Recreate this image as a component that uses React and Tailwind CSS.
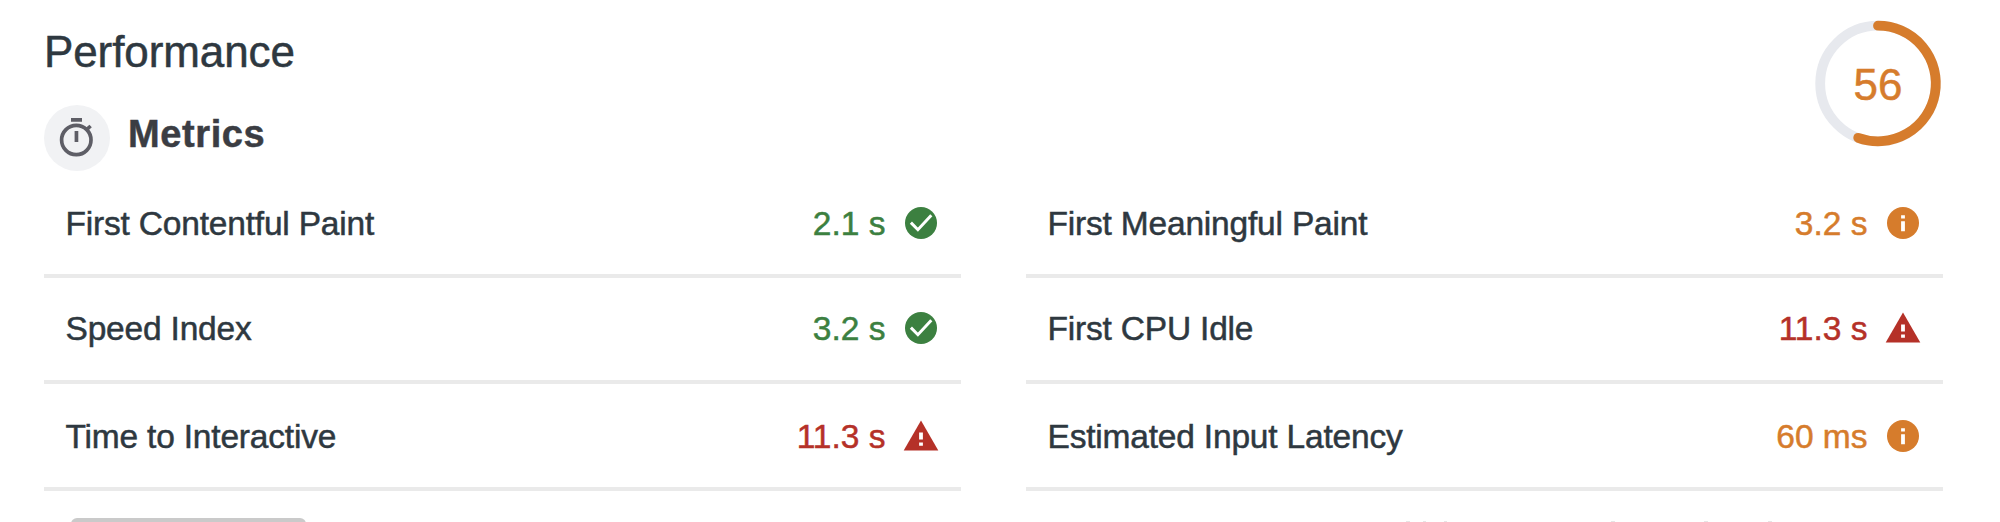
const GREEN = 'text-[#3c8040]';
const ORANGE = 'text-[#d67c2c]';
const RED = 'text-[#b53128]';

function StatusIcon({ kind }) {
  if (kind === 'pass') {
    return (
      <svg className="h-[34px] w-[34px] shrink-0" viewBox="0 0 34 34">
        <circle cx="17" cy="17" r="16" fill="#3c8040" />
        <path d="M6.9 16.6 L13.9 23.7 L27.3 9.3" fill="none" stroke="#fff" strokeWidth="3" />
      </svg>
    );
  }
  if (kind === 'average') {
    return (
      <svg className="h-[34px] w-[34px] shrink-0" viewBox="0 0 34 34">
        <circle cx="17" cy="17" r="16" fill="#d67c2c" />
        <path d="M15.1 9.3h3.8v3.2h-3.8zM15.1 15.3h3.8v9.9h-3.8z" fill="#fff" />
      </svg>
    );
  }
  return (
    <svg className="h-[34px] w-[34px] shrink-0 overflow-visible" viewBox="0 0 34 34">
      <path d="M17 1.5 L34.3 31.6 H-0.3z" fill="#b53128" />
      <path d="M15.1 13.4h3.8v7h-3.8zM15.1 23.4h3.8v3.4h-3.8z" fill="#fff" />
    </svg>
  );
}

function Row({ label, value, kind, color, pad }) {
  return (
    <div className={`flex items-start border-b-4 border-[#eaeaea] pr-[23.5px] pl-[21.5px] ${pad}`}>
      <span className="grow text-[33.5px] leading-[40px] tracking-[-0.19px] text-[#2e3840] [-webkit-text-stroke:0.5px]">{label}</span>
      <span className={`mr-[18px] text-[33.5px] leading-[40px] [-webkit-text-stroke:0.5px] ${color}`}>{value}</span>
      <span className="pt-0.5">
        <StatusIcon kind={kind} />
      </span>
    </div>
  );
}

export default function App() {
  return (
    <div className="h-[522px] w-[2000px] overflow-hidden bg-white pl-11 font-['Liberation_Sans',sans-serif]">
      <div className="flex h-[182px] justify-between pr-[55px]">
        <div>
          <h1 className="mt-[26px] text-[44px] leading-[52px] tracking-[-0.1px] text-[#2e3840] [-webkit-text-stroke:0.5px]">Performance</h1>
          <div className="mt-[27px] flex items-start">
            <div className="flex h-[66px] w-[66px] items-center justify-center rounded-full bg-[#f1f2f4]">
              <svg className="h-[66px] w-[66px]" viewBox="0 0 66 66">
                <circle cx="32.3" cy="35" r="14.7" fill="none" stroke="#5e5e66" strokeWidth="3.7" />
                <path d="M27 13h11v3.8H27zM30.6 26h3.7v11h-3.7z" fill="#5e5e66" />
                <path d="M42.6 24.6 L46.6 21" stroke="#5e5e66" strokeWidth="3.6" />
              </svg>
            </div>
            <h2 className="ml-[18px] pt-[7px] text-[38px] leading-[44px] font-bold tracking-[0.6px] text-[#3b3d43] [-webkit-text-stroke:0.5px]">Metrics</h2>
          </div>
        </div>
        <svg className="mt-[19px] h-[130px] w-[130px] font-['Liberation_Sans',sans-serif]" viewBox="0 0 130 130">
          <circle cx="63" cy="64.5" r="57.8" fill="none" stroke="#e7e9ee" strokeWidth="9.8" />
          <path d="M63 6.7 A57.8 57.8 0 1 1 43.2 118.8" fill="none" stroke="#d67c2c" strokeWidth="9.8" strokeLinecap="round" />
          <text x="63" y="80.5" textAnchor="middle" fontSize="44" fill="#d67c2c" stroke="#d67c2c" strokeWidth="0.5">56</text>
        </svg>
      </div>
      <div className="flex gap-[65px]">
        <div className="w-[917px]">
          <Row label="First Contentful Paint" value="2.1 s" kind="pass" color={GREEN} pad="h-24 pt-[21.5px]" />
          <Row label="Speed Index" value="3.2 s" kind="pass" color={GREEN} pad="h-[106px] pt-[31.3px]" />
          <Row label="Time to Interactive" value="11.3 s" kind="fail" color={RED} pad="h-[107px] pt-[32.5px]" />
        </div>
        <div className="w-[917px]">
          <Row label="First Meaningful Paint" value="3.2 s" kind="average" color={ORANGE} pad="h-24 pt-[21.5px]" />
          <Row label="First CPU Idle" value="11.3 s" kind="fail" color={RED} pad="h-[106px] pt-[31.3px]" />
          <Row label="Estimated Input Latency" value="60 ms" kind="average" color={ORANGE} pad="h-[107px] pt-[32.5px]" />
        </div>
      </div>
      <div className="flex items-start pt-[27px] pl-[27px]">
        <div className="h-16 w-[235px] rounded-md bg-[#cacaca]" />
        {/* Tops of the footnote's tall letters, just above the fold */}
        <div className="mt-[3px] ml-[1100px] flex">
          <i className="h-px w-1 bg-[#e6e6e6]" />
          <i className="ml-[13px] h-px w-[3px] bg-[#e6e6e6]" />
          <i className="ml-[18px] h-px w-[3px] bg-[#e6e6e6]" />
          <i className="ml-[164px] h-px w-1 bg-[#e6e6e6]" />
          <i className="ml-[89px] h-px w-1 bg-[#e6e6e6]" />
          <i className="ml-[60px] h-px w-1 bg-[#e6e6e6]" />
        </div>
      </div>
    </div>
  );
}
